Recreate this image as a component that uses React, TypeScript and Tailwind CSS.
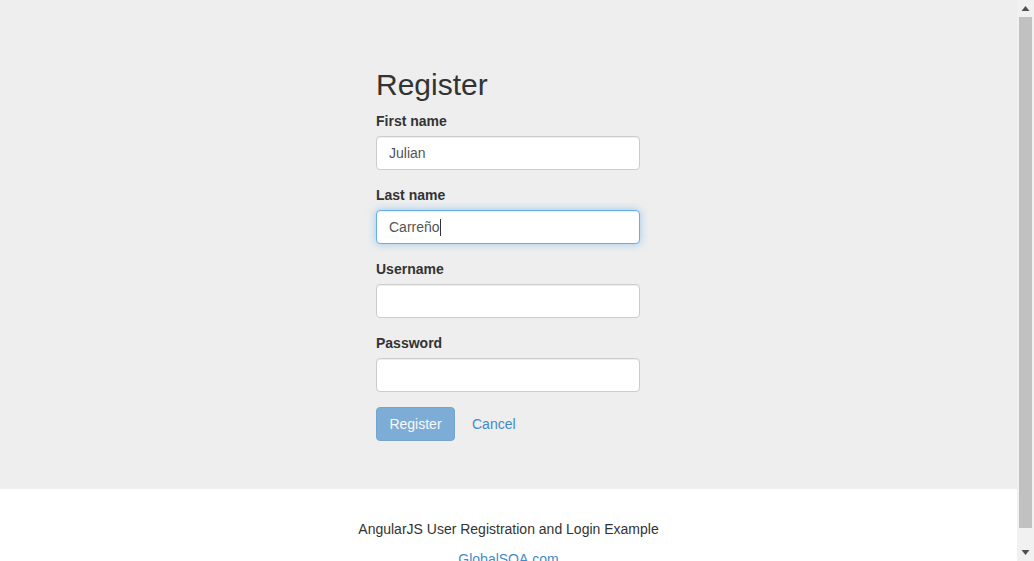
import React from "react";

const Field = ({
  label,
  value,
  focused,
  type = "text",
}: {
  label: string;
  value?: string;
  focused?: boolean;
  type?: string;
}) => (
  <div className="mb-[15px]">
    <label className="block mb-[5px] text-[14px] leading-[20px] font-bold text-[#333]">
      {label}
    </label>
    <div className="relative">
      <input
        type={type}
        defaultValue={value}
        readOnly
        className={
          focused
            ? "block w-full h-[34px] px-3 py-[6px] text-[14px] text-[#555] bg-white rounded-[4px] border border-[#66afe9] outline-none shadow-[inset_0_1px_1px_rgba(0,0,0,0.075),0_0_8px_rgba(102,175,233,0.6)]"
            : "block w-full h-[34px] px-3 py-[6px] text-[14px] text-[#555] bg-white rounded-[4px] border border-[#ccc] outline-none shadow-[inset_0_1px_1px_rgba(0,0,0,0.075)]"
        }
      />
      {/* text caret */}
      {focused && (
        <span className="absolute left-[64px] top-[9px] w-px h-[17px] bg-[#333]" />
      )}
    </div>
  </div>
);

const Scrollbar = () => (
  <div className="w-[17px] h-full bg-[#f1f1f1] flex flex-col items-center">
    <svg width="17" height="17" viewBox="0 0 17 17" className="shrink-0">
      <path d="M4.5 11 L8.5 6 L12.5 11 Z" fill="#505050" />
    </svg>
    <div className="w-[13px] h-[511px] bg-[#c1c1c1]" />
    <div className="flex-1" />
    <svg width="17" height="17" viewBox="0 0 17 17" className="shrink-0">
      <path d="M4.5 6 L8.5 11 L12.5 6 Z" fill="#505050" />
    </svg>
  </div>
);

export default function App() {
  return (
    <div className="h-[561px] w-[1034px] overflow-hidden flex font-['Liberation_Sans',Arial,sans-serif] text-[#333] text-[14px] leading-[20px]">
      <div className="flex-1 h-full overflow-hidden bg-white">
        {/* Jumbotron */}
        <section className="bg-[#eee] py-[48px] flex justify-center pr-px">
          <div className="w-[264px]">
            <h2 className="mt-[20px] mb-[10px] text-[30px] leading-[33px] font-normal text-[#333]">
              Register
            </h2>
            <form>
              <Field label="First name" value="Julian" />
              <Field label="Last name" value="Carreño" focused />
              <Field label="Username" />
              <Field label="Password" type="password" />
              <div className="flex items-center">
                <button
                  type="button"
                  className="h-[34px] w-[79px] rounded-[4px] border border-[#357ebd] bg-[#428bca] text-white text-[14px] opacity-65"
                >
                  Register
                </button>
                <a
                  href="#"
                  className="ml-[5px] h-[34px] px-3 flex items-center text-[#428bca] text-[14px]"
                >
                  Cancel
                </a>
              </div>
            </form>
          </div>
        </section>

        {/* Footer */}
        <footer className="pt-[30px] text-center">
          <p className="mb-[10px]">AngularJS User Registration and Login Example</p>
          <p>
            <a href="#" className="text-[#428bca]">
              GlobalSQA.com
            </a>
          </p>
        </footer>
      </div>
      <Scrollbar />
    </div>
  );
}
